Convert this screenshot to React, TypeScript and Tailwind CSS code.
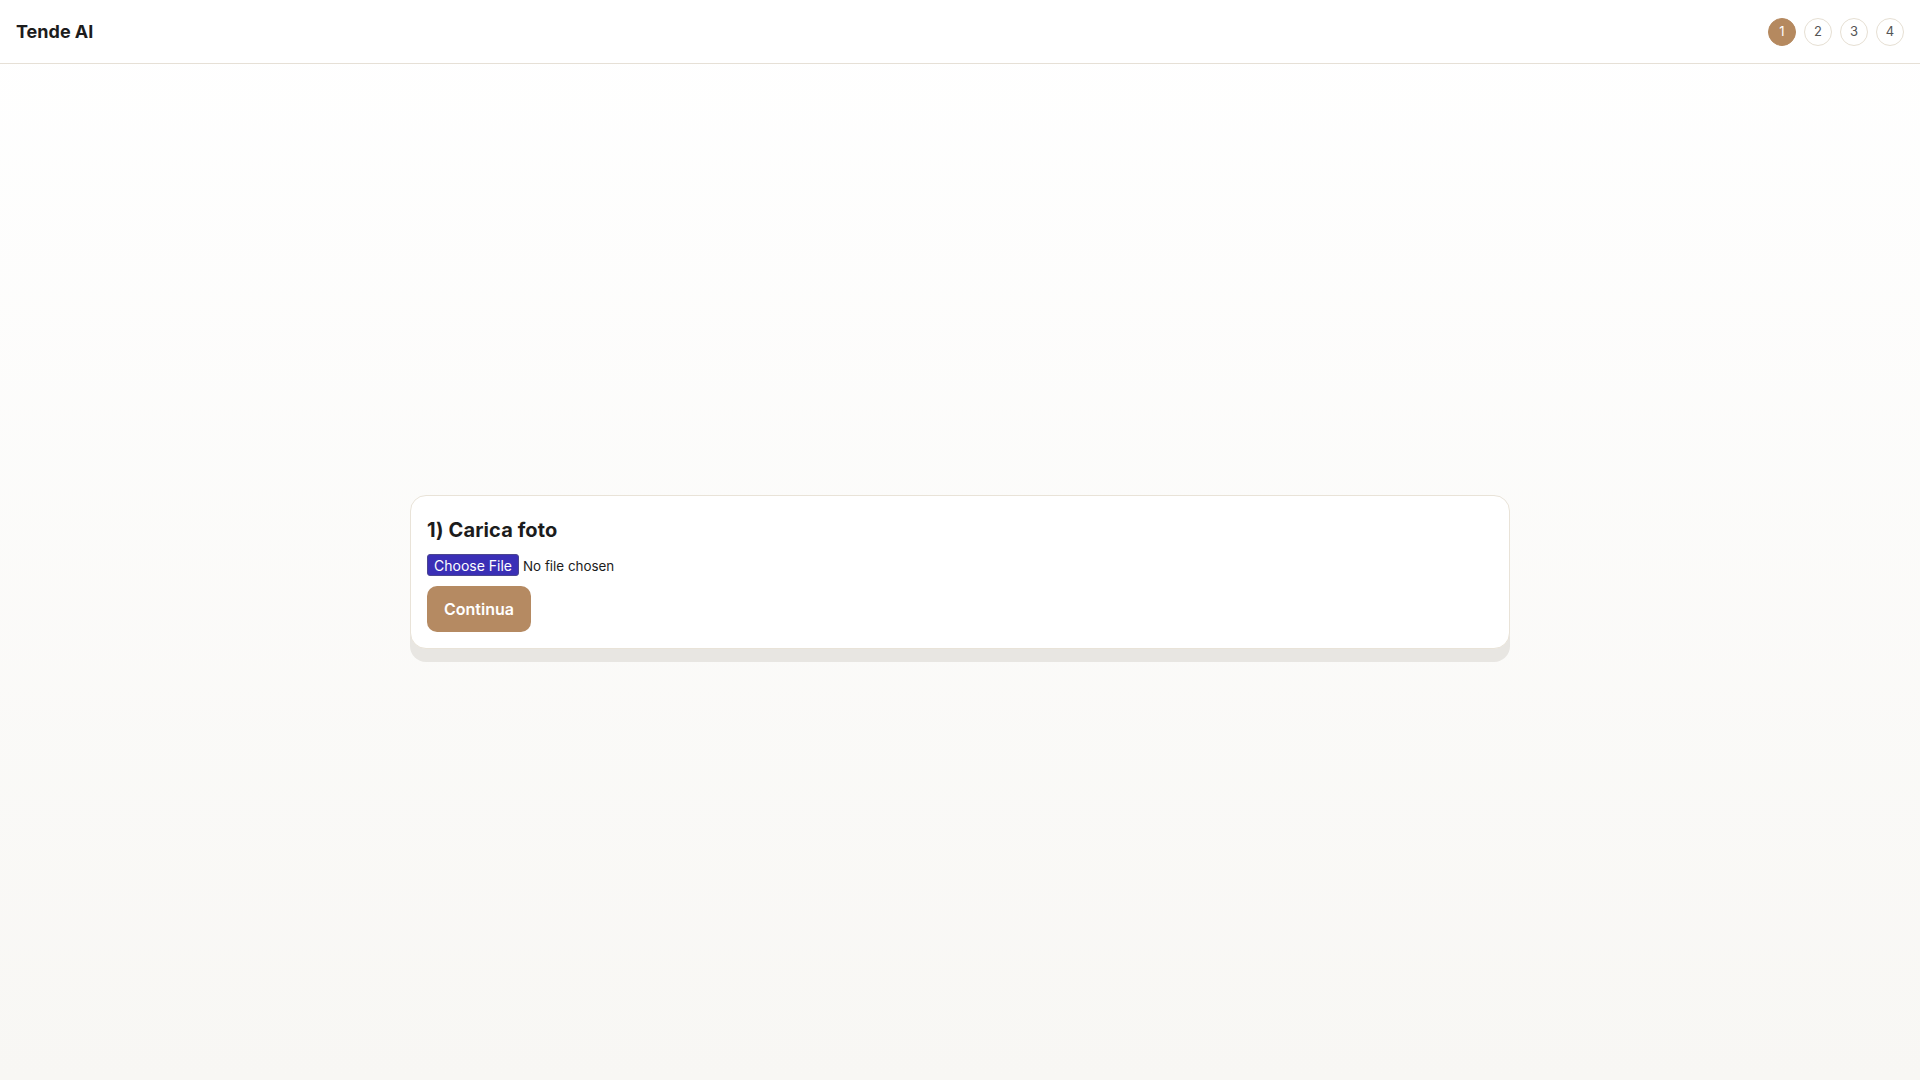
import React from "react";

const steps = [1, 2, 3, 4];

export default function App() {
  return (
    <div className="min-h-screen flex flex-col bg-gradient-to-b from-white to-[#f8f7f4] text-[#1c1c1c] font-['Inter',sans-serif]">
      {/* Top bar */}
      <header className="h-[64px] shrink-0 flex items-center justify-between px-4 bg-white border-b border-[#e6e0d6]">
        <div className="text-[18px] font-bold">Tende AI</div>
        <div className="flex items-center gap-2">
          {steps.map((s) => (
            <div
              key={s}
              className={
                s === 1
                  ? "w-[28px] h-[28px] rounded-full flex items-center justify-center text-[13px] bg-[#b5895f] text-white border border-[#b5895f]"
                  : "w-[28px] h-[28px] rounded-full flex items-center justify-center text-[13px] bg-white text-[#555] border border-[#e6dfd3]"
              }
            >
              {s}
            </div>
          ))}
        </div>
      </header>

      {/* Step card */}
      <main className="flex-1 flex items-center justify-center px-4">
        <section className="w-full max-w-[1100px] bg-white border border-[#e9e3d8] rounded-2xl shadow-[0_13px_0_#e8e6e2] px-4 pt-5 pb-4">
          <h2 className="text-[20px] leading-7 font-bold tracking-[0.1px] mb-2.5">1) Carica foto</h2>
          <input
            type="file"
            accept="image/*"
            className="block text-[13.4px] leading-[22px] h-[22px] text-[#1c1c1c] file:mr-1 file:h-[22px] file:px-[6px] file:rounded-[3px] file:border file:border-[#4b4590] file:bg-[#3a2fb6] file:text-white file:text-[14px]"
          />
          <button className="mt-2.5 h-[46px] px-[17px] rounded-[10px] bg-[#b58a62] text-white text-[16px] font-semibold">
            Continua
          </button>
        </section>
      </main>
    </div>
  );
}
